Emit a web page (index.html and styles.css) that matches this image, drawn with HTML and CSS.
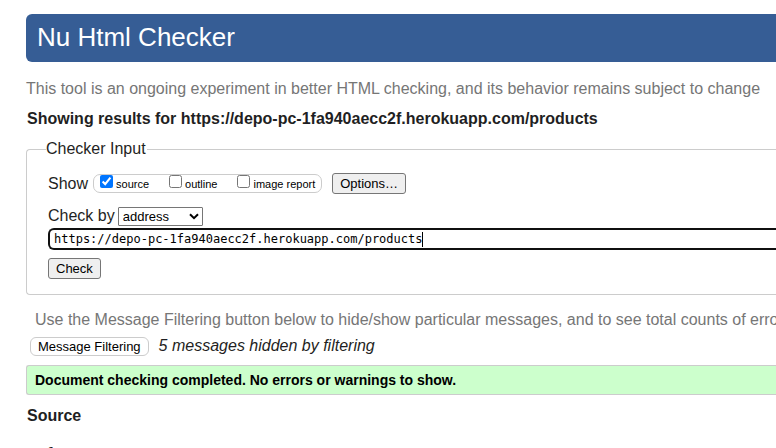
FILE: index.html
```html
<!DOCTYPE html>
<html lang="en">
<head>
<meta charset="utf-8">
<title>Nu Html Checker</title>
<link rel="stylesheet" href="styles.css">
</head>
<body>
<header class="banner"><h1>Nu Html Checker</h1></header>
<main>
<p class="note">This tool is an ongoing experiment in better HTML checking, and its behavior remains subject to change</p>
<h2 class="heading">Showing results for https://depo-pc-1fa940aecc2f.herokuapp.com/products</h2>
<form>
<fieldset class="checker">
<legend>Checker Input</legend>
<div class="row show-row">
<span>Show</span>
<div class="checks">
<label><input type="checkbox" checked><span>source</span></label>
<label><input type="checkbox"><span>outline</span></label>
<label><input type="checkbox"><span>image report</span></label>
</div>
<button class="button options" type="button">Options…</button>
</div>
<div class="row by-row">
<label for="method">Check by</label>
<div class="select">
<select id="method"><option>address</option><option>file upload</option><option>text input</option></select>
<svg class="chevron" viewBox="0 0 10 7" aria-hidden="true"><path d="M1 1.2 5 5.2 9 1.2"/></svg>
</div>
</div>
<div class="address">
<input type="text" aria-label="Address" value="https://depo-pc-1fa940aecc2f.herokuapp.com/products">
<span class="caret"></span>
</div>
<button class="button" type="button">Check</button>
</fieldset>
</form>
<p class="note filter-note">Use the Message Filtering button below to hide/show particular messages, and to see total counts of errors</p>
<div class="filter-row">
<button class="filter" type="button">Message Filtering</button>
<em>5 messages hidden by filtering</em>
</div>
<p class="success">Document checking completed. No errors or warnings to show.</p>
<h2 class="heading source-heading">Source</h2>
<ol class="source"><li></li></ol>
</main>
</body>
</html>
```
FILE: styles.css
```css
* {
  box-sizing: border-box;
}

body {
  margin: 0;
  padding: 14px 0 0 26px;
  height: 100vh;
  overflow: hidden;
  background: #fff;
  color: #1f1f23;
  font: 16px/20px "Liberation Sans", Arial, sans-serif;
}

h1, h2, p, ol {
  margin: 0;
}

.banner {
  padding: 7px 11px 9px;
  border-radius: 6px 0 0 6px;
  background: #365d95;
  color: #fff;
}

.banner h1 {
  font-size: 26px;
  font-weight: 400;
  line-height: 32px;
}

.note {
  margin-top: 17px;
  color: #767676;
  white-space: nowrap;
}

.heading {
  margin: 10px 0 0 1px;
  font-size: 16px;
}

.checker {
  min-width: 0;
  margin: 10px 0 0;
  padding: 14px 0 15px 21px;
  border: 1px solid #ccc;
  border-right: 0;
  border-radius: 4px 0 0 4px;
}

.checker legend {
  margin-left: -2px;
  padding: 0 1px 0 0;
}

.row {
  display: flex;
  align-items: center;
}

.checks {
  display: flex;
  gap: 20px;
  height: 19px;
  margin: 0 10px 0 5px;
  padding: 0 6px;
  border: 1px solid #ccc;
  border-radius: 7px;
  font-size: 11px;
  color: #000;
}

.checks label {
  display: flex;
  gap: 3px;
  line-height: 18px;
}

.checks input {
  width: 13px;
  height: 13px;
  margin: 0;
  accent-color: #0075ff;
}

.button, .filter {
  padding: 0 7px;
  border: 1px solid #767676;
  border-radius: 3px;
  background: #efefef;
  color: #000;
  font: 13px/19px "Liberation Sans", Arial, sans-serif;
}

.by-row {
  gap: 3px;
  margin-top: 12px;
}

.select {
  display: grid;
  align-items: center;
}

.select select {
  grid-area: 1 / 1;
  width: 85px;
  height: 19px;
  padding: 0 4px;
  appearance: none;
  border: 1px solid #767676;
  border-radius: 1px;
  background: #fff;
  color: #000;
  font: 13px/17px "Liberation Sans", Arial, sans-serif;
}

.chevron {
  grid-area: 1 / 1;
  justify-self: end;
  width: 10px;
  height: 7px;
  margin-right: 4px;
  fill: none;
  stroke: #000;
  stroke-width: 2;
  pointer-events: none;
}

.address {
  display: flex;
  align-items: center;
  height: 22px;
  margin: 2px 0 8px;
  padding-left: 4px;
  border: 2px solid #101010;
  border-right: 0;
  border-radius: 6px 0 0 6px;
}

.address input {
  field-sizing: content;
  padding: 1px 0 0;
  border: 0;
  outline: 0;
  background: transparent;
  color: #000;
  font: 12px/17px "DejaVu Sans Mono", monospace;
}

.caret {
  width: 1px;
  height: 15px;
  background: #000;
}

.filter-note {
  margin-left: 9px;
  margin-top: 15px;
}

.filter-row {
  display: flex;
  align-items: center;
  gap: 10px;
  margin: 6px 0 0 4px;
}

.filter {
  border-color: #ccc;
  border-radius: 6px;
  background: #fff;
  line-height: 17px;
}

.success {
  margin-top: 9px;
  padding: 5px 8px;
  border: 1px solid #ccc;
  border-right: 0;
  border-radius: 3px 0 0 3px;
  background: #cfc;
  color: #000;
  font-size: 14px;
  line-height: 18px;
  font-weight: 700;
}

.source-heading {
  margin-top: 11px;
}

.source {
  margin-top: 16px;
  padding-left: 45px;
  font: 13px/20px "DejaVu Sans Mono", monospace;
}
```
